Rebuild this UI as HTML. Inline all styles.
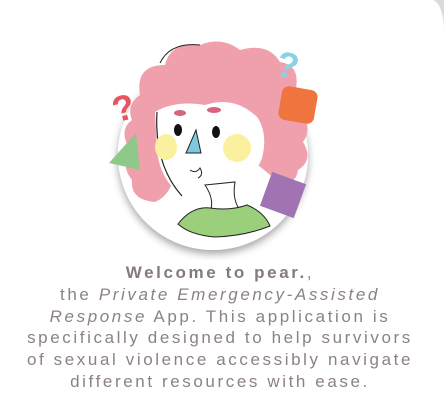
<!DOCTYPE html>
<html><head><style>
html,body{margin:0;padding:0;width:444px;height:416px;overflow:hidden;background:#ddd9df}
.card{position:absolute;left:0;top:0;width:444px;height:416px;background:#fff;border-top-right-radius:12px 30px}
.t{position:absolute;left:-2px;width:444px;top:262px;text-align:center;font-family:"Liberation Sans",sans-serif;font-size:17px;line-height:21.8px;letter-spacing:2.6px;color:#8c8282}
b{font-weight:bold;color:#857b7b}
</style></head><body>
<div class="card"></div>
<svg style="position:absolute;left:0;top:0" width="444" height="260" viewBox="0 0 444 260">
<defs><filter id="s" x="-20%" y="-20%" width="140%" height="140%"><feDropShadow dx="0" dy="4" stdDeviation="4" flood-color="#000" flood-opacity="0.35"/></filter></defs>
<circle cx="213" cy="155" r="95" fill="#fff" filter="url(#s)"/>
<path d="M140 95 Q135 65 165 65 Q170 42 200 45 Q222 36 240 50 Q268 42 280 62 Q300 65 296 88 Q312 100 303 115 Q312 130 303 142 Q314 160 298 170 Q296 185 280 183 L258 165 L175 170 Q172 195 155 202 Q130 200 132 180 Q120 165 130 150 Q118 130 132 120 Q126 105 140 95Z" fill="#f09fac"/>
<path d="M160 63 Q170 42 200 45" stroke="#222" stroke-width="1" fill="none"/>
<path d="M155 112 Q175 100 205 105 Q235 95 258 118 Q268 135 262 158 Q255 178 232 183 L215 186 Q205 195 182 196 Q160 180 157 150Z" fill="#fff"/>
<path d="M157 112 Q154 165 182 196" stroke="#222" stroke-width="1.2" fill="none"/>
<path d="M205 185 L235 182 Q232 200 240 210 L210 212 Q215 200 205 185Z" fill="#fff" stroke="#222" stroke-width="1"/>
<path d="M178 224 Q192 206 210 208 Q230 211 247 205 Q264 212 270 226 Q245 236 215 237 Q190 235 178 224Z" fill="#9ccf7b" stroke="#222" stroke-width="1"/>
<ellipse cx="166" cy="147" rx="11" ry="13" fill="#fbf09e"/>
<circle cx="237" cy="148" r="14" fill="#fbf09e"/>
<ellipse cx="180" cy="113" rx="6" ry="3" fill="#d7637d"/>
<ellipse cx="214" cy="110" rx="7" ry="3" fill="#d7637d"/>
<ellipse cx="178" cy="130" rx="4" ry="6" fill="#111"/>
<ellipse cx="216" cy="132" rx="4" ry="6" fill="#111"/>
<path d="M196 130 L201 153 L186 153Z" fill="#7ec9de" stroke="#222" stroke-width="1"/>
<path d="M190 170 Q196 174 200 168 Q204 175 198 178" stroke="#222" stroke-width="1" fill="none"/>
<path d="M136 133 L140 170 L109 163Z" fill="#8ec98a"/>
<rect x="280" y="88" width="36" height="34" rx="7" fill="#f0743e" transform="rotate(10 298 105)"/>
<rect x="265" y="177" width="36" height="36" fill="#a173b3" transform="rotate(20 283 195)"/>
<text x="113" y="120" font-family="Liberation Sans,sans-serif" font-weight="bold" font-size="36" fill="#e9545e" transform="rotate(-15 125 110)">?</text>
<text x="278" y="78" font-family="Liberation Sans,sans-serif" font-weight="bold" font-size="36" fill="#86d3e6" transform="rotate(15 290 60)">?</text>
</svg>
<div class="t"><b>Welcome to pear.</b>,<br>the <i>Private Emergency-Assisted<br>Response</i> App. This application is<br>specifically designed to help survivors<br>of sexual violence accessibly navigate<br>different resources with ease.</div>
</body></html>
